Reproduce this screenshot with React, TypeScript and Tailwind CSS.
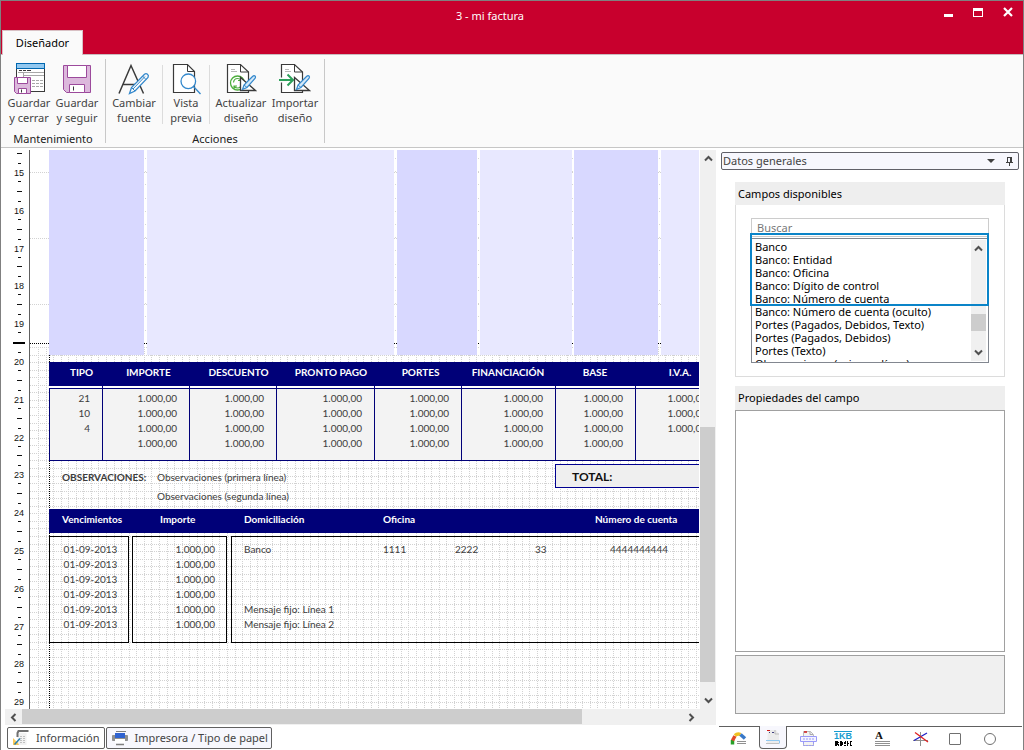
import type { ReactNode } from 'react';

const NUMBERS = [15, 16, 17, 18, 19, 20, 21, 22, 23, 24, 25, 26, 27, 28, 29];

const TAX_COLUMNS = [
  { title: 'TIPO', col: 'w-[53px]', shift: 'pl-3' },
  { title: 'IMPORTE', col: 'w-[87px]', shift: 'pl-1.5' },
  { title: 'DESCUENTO', col: 'w-[87px]', shift: 'pl-3' },
  { title: 'PRONTO PAGO', col: 'w-[98px]', shift: 'pl-3' },
  { title: 'PORTES', col: 'w-[87px]', shift: 'pl-1.5' },
  { title: 'FINANCIACIÓN', col: 'w-[94px]', shift: '' },
  { title: 'BASE', col: 'w-[80px]', shift: '' },
  { title: 'I.V.A.', col: 'w-[84px]', shift: 'pl-1.5' },
];

const AMOUNT = '1.000,00';
const TAX_ROWS = [
  ['21', AMOUNT, AMOUNT, AMOUNT, AMOUNT, AMOUNT, AMOUNT, AMOUNT],
  ['10', AMOUNT, AMOUNT, AMOUNT, AMOUNT, AMOUNT, AMOUNT, AMOUNT],
  ['4', AMOUNT, AMOUNT, AMOUNT, AMOUNT, AMOUNT, AMOUNT, AMOUNT],
  ['', AMOUNT, AMOUNT, AMOUNT, AMOUNT, AMOUNT, AMOUNT, ''],
];

const DUE_DATES = ['01-09-2013', '01-09-2013', '01-09-2013', '01-09-2013', '01-09-2013', '01-09-2013'];

const FIELDS = [
  'Banco',
  'Banco: Entidad',
  'Banco: Oficina',
  'Banco: Dígito de control',
  'Banco: Número de cuenta',
  'Banco: Número de cuenta (oculto)',
  'Portes (Pagados, Debidos, Texto)',
  'Portes (Pagados, Debidos)',
  'Portes (Texto)',
  'Observaciones (primera línea)',
];

/* ---------- Icons ---------- */

function SaveCloseIcon() {
  return (
    <svg width="32" height="32" viewBox="0 0 32 32" fill="none">
      <rect x="3.5" y="0.5" width="28" height="28" fill="#fff" stroke="#3a3a3a" />
      <rect x="3.5" y="0.5" width="28" height="5" fill="#92c8f0" stroke="#0067b0" />
      <path d="M6 7.5h3M10 7.5h3M14 7.5h4" stroke="#3a3a3a" />
      <path d="M5 9.5h26M10.5 10v4M10 12.5h21" stroke="#a8a8a8" />
      <path d="M19 17.5h12M19 20.5h12M19 23.5h12" stroke="#a8a8a8" strokeDasharray="3 1" />
      <path d="M1.5 14.5h16v16H3.5l-2-2z" fill="#dcb8dc" stroke="#9c4a9c" />
      <path d="M4.5 14.5h10v6h-10zM5.5 25.5h8v5h-8z" fill="#fff" stroke="#9c4a9c" />
      <path d="M8.5 26.5v3" stroke="#3a3a3a" />
    </svg>
  );
}

function SaveIcon() {
  return (
    <svg width="32" height="32" viewBox="0 0 32 32" fill="none">
      <path d="M2.5 2.5h27v27h-24l-3-3z" fill="#dcb8dc" stroke="#9c4a9c" />
      <path d="M6.5 2.5h19v12h-19zM8.5 21.5h15v8h-15z" fill="#fff" stroke="#9c4a9c" />
      <path d="M12.5 23.5v4" stroke="#3a3a3a" />
    </svg>
  );
}

function FontIcon() {
  return (
    <svg width="32" height="32" viewBox="0 0 32 32" fill="none">
      <path d="M1 30.5L13 2.5l12.5 28M5 21.5h16" stroke="#3a3a3a" strokeWidth="1.5" />
      <path d="M11.5 30.5l2-6L26.5 11.2q1.5-1.2 3 0t.5 3.3L17 28z" fill="#fafafa" stroke="#3388cc" strokeWidth="1.3" />
      <path d="M13.5 24.5l3.5 3.5M24.5 13l3.5 3.5M15 26L27 13.5" stroke="#3388cc" />
    </svg>
  );
}

function PreviewIcon() {
  return (
    <svg width="32" height="32" viewBox="0 0 32 32" fill="none">
      <path d="M3.5 1.5h14l7 7v21h-21z" fill="#fff" stroke="#3a3a3a" strokeWidth="1.2" />
      <path d="M17.5 1.5v7h7" stroke="#3a3a3a" />
      <circle cx="18.3" cy="18.3" r="7.3" fill="#fff" stroke="#3388cc" strokeWidth="1.3" />
      <path d="M23.5 23.5l7 7.5" stroke="#3388cc" strokeWidth="1.3" />
    </svg>
  );
}

function DraftTools() {
  return (
    <>
      <path d="M15.5 14.5v13h15z" fill="#fff" stroke="#3a3a3a" strokeWidth="1.3" />
      <path d="M17.5 26.5L19 22l8.5-8.5q1.5-1.5 2.500-.5t0 2.500L22 24.500z" fill="#d4e8f8" stroke="#3388cc" strokeWidth="1.2" />
      <path d="M19 22l3 2.5" stroke="#3388cc" />
    </>
  );
}

function UpdateIcon() {
  return (
    <svg width="32" height="32" viewBox="0 0 32 32" fill="none">
      <path d="M2.5 1.5h13l8 7.5v20.5h-21z" fill="#fff" stroke="#3a3a3a" strokeWidth="1.2" />
      <path d="M15.5 1.5V9h8" stroke="#3a3a3a" />
      <path d="M6 6.5h4M6 8.5h6" stroke="#b8b8b8" />
      <circle cx="12.5" cy="20" r="7" fill="#fff" stroke="#4cae3c" strokeWidth="1.3" />
      <path d="M8.5 19.5q.5-4 4-4 2 0 3.5 1.5M16 14.5v3h-3M16.5 21q-.5 4-4 4-2 0-3.5-1.5M9 26v-3h3" stroke="#4cae3c" strokeWidth="1.2" />
      <DraftTools />
    </svg>
  );
}

function ImportIcon() {
  return (
    <svg width="32" height="32" viewBox="0 0 32 32" fill="none">
      <path d="M2.5 1.5h13l8 7.5v20.5h-21z" fill="#fff" stroke="#3a3a3a" strokeWidth="1.2" />
      <path d="M15.5 1.5V9h8" stroke="#3a3a3a" />
      <path d="M6 6.5h4M6 8.5h6" stroke="#b8b8b8" />
      <path d="M0 17h8" stroke="#fafafa" strokeWidth="5" />
      <path d="M0 17h13.5M8.5 11.5L14 17l-5.5 5.5" stroke="#2ca05a" strokeWidth="2" />
      <DraftTools />
    </svg>
  );
}

function Chevron({ turn }: { turn: string }) {
  return (
    <svg width="9" height="9" viewBox="0 0 9 9" fill="none" className={turn} aria-hidden="true">
      <path d="M1 6.5L4.5 3 8 6.5" stroke="#505050" strokeWidth="2" />
    </svg>
  );
}

function InfoIcon() {
  return (
    <svg width="18" height="18" viewBox="0 0 18 18" fill="none">
      <path d="M6 3.5l-.5 4V16h9V4z" fill="#f2f2f2" />
      <path d="M5.5 8V4l1-2h10" stroke="#707070" strokeWidth="2" />
      <path d="M8 7.5h5M8 9.5h5M8 11.5h5M8 13.5h5" stroke="#c0c0c0" strokeDasharray="2 1" />
      <path d="M1 9l4 4v-1l2 4H1z" fill="#f8c858" />
      <path d="M2.5 15.5l5.500-6" stroke="#2880b0" strokeWidth="1.5" />
    </svg>
  );
}

function PrinterIcon() {
  return (
    <svg width="18" height="18" viewBox="0 0 18 18" fill="none">
      <path d="M5 2.5h10" stroke="#808080" />
      <path d="M1.5 6.5h15v5h-15z" stroke="#909090" fill="#909090" />
      <path d="M4 4h10v5H4z" fill="#2f62d0" />
      <path d="M4 10h10v4H4z" fill="#fff" />
      <path d="M5 15.5h8" stroke="#808080" strokeWidth="1.5" />
    </svg>
  );
}

/* ---------- Ribbon ---------- */

function RibbonButton({ icon, lines, width }: { icon: ReactNode; lines: [string, string]; width: string }) {
  return (
    <button type="button" className={`flex flex-col items-center pt-2 whitespace-nowrap leading-[15px] text-[#444] ${width}`}>
      {icon}
      <span>{lines[0]}</span>
      <span>{lines[1]}</span>
    </button>
  );
}

function Ribbon() {
  return (
    <div className="flex h-[94px] shrink-0 border-t border-b border-t-[#c9bcbf] border-b-[#c6c6c6] bg-[#fafafa] text-[11px]">
      <div className="flex flex-col px-1">
        <div className="flex">
          <RibbonButton icon={<SaveCloseIcon />} lines={['Guardar', 'y cerrar']} width="w-12" />
          <RibbonButton icon={<SaveIcon />} lines={['Guardar', 'y seguir']} width="w-12" />
        </div>
        <div className="mt-1.5 text-center leading-[15px] text-[#222]">Mantenimiento</div>
      </div>
      <div className="my-1 w-px bg-[#c8c8c8]" />
      <div className="flex flex-col">
        <div className="flex pr-1.5">
          <RibbonButton icon={<FontIcon />} lines={['Cambiar', 'fuente']} width="w-14" />
          <div className="mt-2.5 h-[59px] w-px bg-[#dcdcdc]" />
          <RibbonButton icon={<PreviewIcon />} lines={['Vista', 'previa']} width="w-[46px]" />
          <div className="mt-2.5 h-[59px] w-px bg-[#dcdcdc]" />
          <RibbonButton icon={<UpdateIcon />} lines={['Actualizar', 'diseño']} width="w-[62px]" />
          <RibbonButton icon={<ImportIcon />} lines={['Importar', 'diseño']} width="w-[46px]" />
        </div>
        <div className="mt-1.5 text-center leading-[15px] text-[#222]">Acciones</div>
      </div>
      <div className="my-1 w-px bg-[#c8c8c8]" />
    </div>
  );
}

/* ---------- Design canvas ---------- */

function Ruler() {
  return (
    <svg className="h-full w-7 shrink-0" fontFamily="Liberation Sans, sans-serif" fontSize="9" textAnchor="middle" shapeRendering="crispEdges">
      {NUMBERS.map((n, i) => {
        const y = 22 + i * 37.8;
        return (
          <g key={n} fill="#111">
            <text x="18" y={Math.round(y) + 4}>{n}</text>
            <rect x="17" y={Math.round(y - 9)} width="3" height="1" />
            <rect x="16" y={Math.round(y - 19)} width="5" height="1" />
            <rect x="17" y={Math.round(y + 9)} width="3" height="1" />
          </g>
        );
      })}
      <rect x="12" y="192" width="12" height="2" fill="#000" />
    </svg>
  );
}

// Millimetre grid: coarse dots behind the detail band, fine dots in the footer
function Grid() {
  const across = Array.from({ length: 200 }, (_, i) => Math.round(8 + i * 7.56));
  const down = Array.from({ length: 120 }, (_, i) => Math.round(197 + i * 7.56));
  return (
    <svg className="absolute inset-0 h-full w-full" shapeRendering="crispEdges" aria-hidden="true">
      <g stroke="#d2d2d2" strokeDasharray="1 1">
        {[22.5, 88.5, 154.5].map((y) => <line key={y} x1="0" x2="2000" y1={y} y2={y} />)}
        {across.map((x) => <line key={x} x1={x + 0.5} x2={x + 0.5} y1="197" y2="2000" />)}
        {down.map((y) => <line key={y} x1="0" x2="2000" y1={y + 0.5} y2={y + 0.5} />)}
      </g>
      <g stroke="#d6d6d6" strokeDasharray="1 12.2" strokeDashoffset="-8">
        {[115.5, 365.5, 448.5, 542.5, 629.5].map((x) => <line key={x} x1={x} x2={x} y1="0" y2="193" />)}
      </g>
      <g stroke="#000" strokeDasharray="1 1">
        <line x1="0" x2="2000" y1="193.5" y2="193.5" />
        <line x1="19.5" x2="19.5" y1="205" y2="2000" />
      </g>
    </svg>
  );
}

function TaxTable() {
  return (
    <table className="mt-[7px] w-[670px] table-fixed border-separate border-spacing-0">
      <colgroup>
        {TAX_COLUMNS.map((c) => <col key={c.title} className={c.col} />)}
      </colgroup>
      <thead>
        <tr className="h-6 bg-[#000078] text-white">
          {TAX_COLUMNS.map((c) => (
            <th key={c.title} className={`py-0 pr-0 pb-1 font-bold ${c.shift}`}>{c.title}</th>
          ))}
        </tr>
      </thead>
      <tbody>
        <tr className="h-0.5 bg-white">
          {TAX_COLUMNS.map((c) => <td key={c.title} className="border-l border-[#000078] p-0 first:border-white" />)}
        </tr>
        <tr className="h-[3px] bg-[#f3f3f3]">
          {TAX_COLUMNS.map((c) => <td key={c.title} className="border-t border-l border-[#000078] p-0" />)}
        </tr>
        {TAX_ROWS.map((row, r) => (
          <tr key={r} className="h-[15px] bg-[#f3f3f3]">
            {row.map((value, i) => (
              <td key={i} className="border-l border-[#000078] py-0 pr-3 pl-0 text-right">{value}</td>
            ))}
          </tr>
        ))}
        <tr className="h-[10px] bg-[#f3f3f3]">
          {TAX_COLUMNS.map((c) => <td key={c.title} className="border-b border-l border-[#000078] p-0" />)}
        </tr>
      </tbody>
    </table>
  );
}

function InvoiceCanvas() {
  return (
    <div className="relative min-w-0 flex-1 overflow-hidden border-l border-[#606060] bg-white">
      <Grid />
      <div className="relative flex w-[690px] flex-col pl-[19px] font-[Lato,sans-serif] text-[10px] leading-[15px] text-[#3c3c3c]">
        <div className="flex h-[205px]">
          <div className="mr-[3px] w-[95px] bg-[#d8d8ff]" />
          <div className="mr-[3px] w-[247px] bg-[#e8e8ff]" />
          <div className="mr-[3px] w-[80px] bg-[#d8d8ff]" />
          <div className="mr-0.5 w-[92px] bg-[#e8e8ff]" />
          <div className="mr-[3px] w-[84px] bg-[#d8d8ff]" />
          <div className="flex-1 bg-[#e8e8ff]" />
        </div>
        <TaxTable />
        <div className="flex h-[48px] pt-[3px]">
          <div className="w-[95px] pt-1.5 pl-[13px] font-bold">OBSERVACIONES:</div>
          <div className="flex w-[411px] flex-col gap-1 pt-1.5 pl-[13px]">
            <span>Observaciones (primera línea)</span>
            <span>Observaciones (segunda línea)</span>
          </div>
          <div className="flex h-6 flex-1 items-center border border-[#000090] bg-[#efefef] pl-4 text-[12px] font-bold text-[#111]">
            TOTAL:
          </div>
        </div>
        <div className="flex h-6 bg-[#000078] pt-[3px] pl-[13px] font-bold text-white">
          <span className="w-[98px]">Vencimientos</span>
          <span className="w-[84px]">Importe</span>
          <span className="w-[139px]">Domiciliación</span>
          <span className="w-[212px]">Oficina</span>
          <span>Número de cuenta</span>
        </div>
        <div className="mt-[3px] flex h-[107px]">
          <div className="mr-[3px] w-[80px] border border-black pt-[5px] pl-[3px] text-center">
            {DUE_DATES.map((d, i) => <div key={i}>{d}</div>)}
          </div>
          <div className="mr-1 w-[95px] border border-black pt-[5px] pr-[11px] text-right">
            {DUE_DATES.map((_, i) => <div key={i}>{AMOUNT}</div>)}
          </div>
          <div className="flex flex-1 flex-col border border-black pt-[5px] pl-3">
            <div className="flex">
              <span className="w-[139px]">Banco</span>
              <span className="w-[72px]">1111</span>
              <span className="w-20">2222</span>
              <span className="w-[75px]">33</span>
              <span>4444444444</span>
            </div>
            <div className="mt-[45px]">Mensaje fijo: Línea 1</div>
            <div>Mensaje fijo: Línea 2</div>
          </div>
        </div>
      </div>
    </div>
  );
}

function Designer() {
  return (
    <section className="mr-[3px] flex min-w-0 flex-1 flex-col pt-0.5">
      <div className="flex min-h-0 flex-1">
        <Ruler />
        <InvoiceCanvas />
        <div className="ml-px flex w-4 shrink-0 flex-col items-center bg-[#f0f0f0] pt-1 pb-1">
          <Chevron turn="" />
          <div className="flex w-full flex-1 flex-col pt-[264px]">
            <div className="h-[255px] w-[15px] bg-[#cdcdcd]" />
          </div>
          <Chevron turn="rotate-180" />
        </div>
      </div>
      <div className="ml-1 flex h-4 shrink-0 items-center bg-[#f0f0f0]">
        <span className="flex w-[17px] justify-center"><Chevron turn="-rotate-90" /></span>
        <div className="h-[15px] w-[560px] self-start bg-[#cdcdcd]" />
        <span className="mr-5 ml-auto"><Chevron turn="rotate-90" /></span>
      </div>
      <div className="flex h-[25px] shrink-0 gap-px pt-0.5 pl-1.5 text-[11px] text-[#444]">
        <button type="button" className="flex h-[22px] items-center gap-1.5 rounded-xs border border-[#606060] bg-white px-1">
          <InfoIcon />
          Información
        </button>
        <button type="button" className="flex h-[22px] items-center gap-1.5 rounded-xs border border-[#606060] bg-[#f7f7fd] pr-[3px] pl-1">
          <PrinterIcon />
          Impresora / Tipo de papel
        </button>
      </div>
    </section>
  );
}

/* ---------- Side panel ---------- */

function ElementTabs() {
  return (
    <div className="mr-[1px] flex h-6 shrink-0 border-t border-[#606060]">
      <button type="button" aria-label="Datos" className="flex w-10 items-center justify-center">
        <svg width="18" height="16" viewBox="0 0 18 16" fill="none">
          <path d="M2.5 13.5V9" stroke="#28a028" strokeWidth="3.5" />
          <path d="M2.5 9.5L5 5" stroke="#e04828" strokeWidth="3.5" />
          <path d="M5 4.5Q7.5 2 10.5 3.5" stroke="#f0c020" strokeWidth="3.5" />
          <path d="M10.5 3.5l4.5 4" stroke="#3878c8" strokeWidth="3.5" />
          <path d="M7 10.5h9M7 12.5h9" stroke="#909090" />
        </svg>
      </button>
      <button type="button" aria-label="Datos generales" className="-mt-px flex h-[23px] w-7 items-center justify-center rounded-b border border-t-0 border-[#606060] bg-[#f7f7fd]">
        <svg width="16" height="16" viewBox="0 0 16 16" fill="none">
          <path d="M3 1h8l3 4v10H2z" fill="#ececec" />
          <path d="M2 1.5h3" stroke="#d01818" />
          <path d="M4 3.5h1M7 3.5h2" stroke="#404080" />
          <path d="M10 1v4h4" stroke="#bbb" />
          <path d="M1 11.5h13.5v3" stroke="#90c8f0" />
          <path d="M1 14.5h13" stroke="#c0c0c0" />
        </svg>
      </button>
      <button type="button" aria-label="Impresión" className="flex w-[42px] items-center justify-center">
        <svg width="17" height="17" viewBox="0 0 17 17" fill="none">
          <path d="M3.5 1.5h7l3 3v11h-10z" fill="#f2f2f2" stroke="#bbb" />
          <path d="M4 2h3" stroke="#d01818" strokeWidth="1.5" />
          <path d="M10 1.5v3h3" stroke="#aaa" />
          <path d="M.5 6.5h16v5H.5z" fill="#f4f4ff" stroke="#9a9af8" />
          <path d="M3 9h11M3.5 12v3.5h10V12" stroke="#9a9af8" strokeDasharray="2 1" />
        </svg>
      </button>
      <button type="button" aria-label="Código de barras" className="flex w-7 flex-col items-center justify-center">
        <span className="border-t border-[#189cd0] font-[Liberation_Sans,sans-serif] text-[9px] leading-[9px] font-bold text-[#189cd0]">1KB</span>
        <svg width="17" height="5" viewBox="0 0 17 5" shapeRendering="crispEdges">
          <path d="M0 0h3v1h1v1H3v1h1v2H3V4H2v1H0zM5 0h2v1h1v3H7v1H5zM9 1h1V0h1v3H9zM9 4h2v1H9zM12 0h1v2h1v1h-1v2h-1zM15 0h2v1h-1v3h1v1h-2z" fill="#000" />
        </svg>
      </button>
      <button type="button" aria-label="Texto" className="flex w-[50px] items-center justify-center">
        <svg width="15" height="16" viewBox="0 0 15 16">
          <text x="0" y="8" fontFamily="Liberation Serif, serif" fontSize="11" fontWeight="bold" fill="#111">A</text>
          <path d="M0 10.5h15M0 12.5h15M0 14.5h15" stroke="#909090" />
        </svg>
      </button>
      <button type="button" aria-label="Línea" className="flex w-7 items-center justify-center">
        <svg width="16" height="16" viewBox="0 0 16 16" fill="none">
          <path d="M7.5 1v14M0 9.5h15" stroke="#909090" />
          <path d="M1 9.5L14 2" stroke="#2020c8" strokeWidth="1.3" />
          <path d="M2 1.5L15 11" stroke="#e02020" strokeWidth="1.3" />
        </svg>
      </button>
      <button type="button" aria-label="Rectángulo" className="flex w-10 items-center justify-center">
        <span className="h-3 w-3 rounded-[1px] border border-[#707070]" />
      </button>
      <button type="button" aria-label="Elipse" className="flex w-[30px] items-center justify-center">
        <span className="h-3 w-3 rounded-full border border-[#707070]" />
      </button>
    </div>
  );
}

function SidePanel() {
  return (
    <aside className="flex w-[304px] shrink-0 flex-col pt-1">
      <div className="mr-1 ml-[2px] flex h-[18px] shrink-0 items-center rounded-xs border border-[#606068] bg-[#f7f7fd] pl-px text-[11px] text-[#444]">
        <span className="flex-1">Datos generales</span>
        <button type="button" aria-label="Opciones" className="mr-2.5 border-x-4 border-t-4 border-x-transparent border-t-[#404040]" />
        <button type="button" aria-label="Fijar panel" className="mr-1">
          <svg width="9" height="11" viewBox="0 0 9 11" fill="none" shapeRendering="crispEdges">
            <path d="M2.5 6V1.5h4V6M5.5 1v5M1 6.5h7M4.5 7v3" stroke="#404040" />
          </svg>
        </button>
      </div>
      <div className="mt-3 mr-[18px] mb-3 ml-4 flex min-h-0 flex-1 flex-col text-[11px]">
        <h2 className="h-[23px] shrink-0 bg-[#eee] pl-[3px] leading-[23px] text-black">Campos disponibles</h2>
        <div className="shrink-0 border border-t-0 border-[#dcdcdc] px-[15px] py-[13px]">
          <div className="relative">
            <input type="text" aria-label="Buscar" placeholder="Buscar" className="block h-[19px] w-full border border-[#ccc] px-[5px] pb-px text-[#444] outline-none placeholder:text-[#777]" />
            <div className="mt-px flex h-[125px] border border-[#828790] pl-[3px] leading-[13px] text-black">
              <ul className="min-w-0 flex-1 overflow-hidden pt-px">
                {FIELDS.map((f) => <li key={f} className="whitespace-nowrap">{f}</li>)}
              </ul>
              <div className="my-px mr-0.5 flex w-[15px] flex-col items-center bg-[#f0f0f0] py-1">
                <Chevron turn="" />
                <div className="w-full flex-1 pt-[61px]">
                  <div className="h-[17px] bg-[#cdcdcd]" />
                </div>
                <Chevron turn="rotate-180" />
              </div>
            </div>
            {/* Highlight around the bank fields */}
            <div className="pointer-events-none absolute top-[15px] right-0 -left-px h-[73px] border-2 border-[#0a84c8]" />
          </div>
        </div>
        <h2 className="mt-[9px] h-6 shrink-0 bg-[#eee] pl-[3px] leading-6 text-black">Propiedades del campo</h2>
        <div className="min-h-0 flex-1 border border-[#a0a0a0]" />
        <div className="mt-[3px] h-[59px] shrink-0 border border-[#a0a0a0] bg-[#f0f0f0]" />
      </div>
      <ElementTabs />
    </aside>
  );
}

export default function App() {
  return (
    <div className="flex h-screen flex-col overflow-hidden border-t border-r border-l border-[#808080] bg-white font-[Noto_Sans,sans-serif]">
      <header className="relative flex h-[53px] shrink-0 flex-col justify-between bg-[#c8002d]">
        <h1 className="pt-[7px] pr-11 text-center text-[11px] leading-[15px] text-white">3 - mi factura</h1>
        <div className="absolute top-1.5 right-2.5 flex items-start gap-5 text-white">
          <button type="button" aria-label="Minimizar" className="mt-[7px] h-[3px] w-[9px] bg-white" />
          <button type="button" aria-label="Maximizar" className="mt-px h-[9px] w-[10px] border border-t-[3px] border-white" />
          <button type="button" aria-label="Cerrar">
            <svg width="10" height="10" viewBox="0 0 10 10" stroke="#fff" strokeWidth="2.2">
              <path d="M1 1l8 8M9 1l-8 8" />
            </svg>
          </button>
        </div>
        <button type="button" className="relative z-10 -mb-px ml-px h-[25px] w-[81px] border border-b-0 border-[#d8c0c4] bg-[#fafafa] text-[11px] text-black">
          Diseñador
        </button>
      </header>
      <Ribbon />
      <main className="flex min-h-0 flex-1">
        <Designer />
        <SidePanel />
      </main>
    </div>
  );
}
